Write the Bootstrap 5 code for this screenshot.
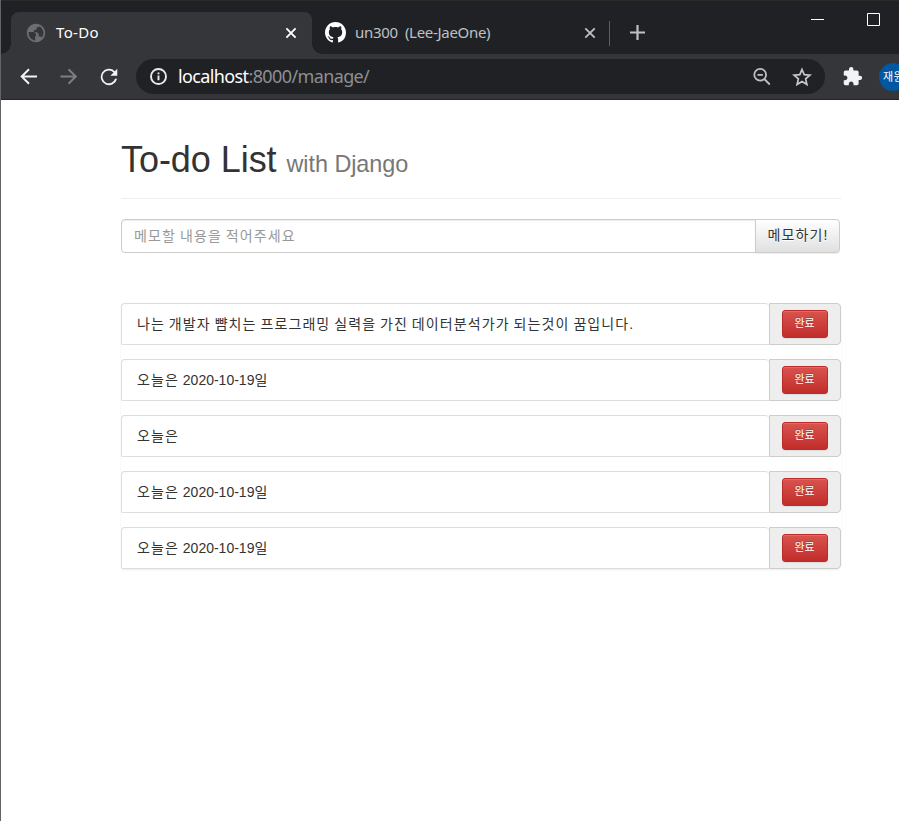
<!DOCTYPE html>
<html lang="ko">
<head>
<meta charset="utf-8">
<title>To-Do</title>
<link href="https://cdn.jsdelivr.net/npm/bootstrap@5.3.0/dist/css/bootstrap.min.css" rel="stylesheet">
<style>
body{font-family:"Liberation Sans","Noto Sans CJK KR",sans-serif;font-size:14px;line-height:20px;color:#333;background:#fff;height:821px;overflow:hidden}
.window{height:821px;border-left:1px solid #636466}
.chrome-text{font-family:"Noto Sans","Noto Sans CJK KR",sans-serif}
.tabstrip{height:54px;background:#202124;border-top:1px solid #2b2c2a}
.tab-on{width:301px;height:42px;margin-left:10px;padding:0 14px 0 15px;background:#35363a;border-radius:8px 8px 0 0;color:#fff;position:relative}
.tab-on::before,.tab-on::after{content:"";position:absolute;bottom:0;width:10px;height:10px}
.tab-on::before{left:-10px;background:radial-gradient(circle at 0 0,transparent 9.5px,#35363a 10px)}
.tab-on::after{right:-10px;background:radial-gradient(circle at 100% 0,transparent 9.5px,#35363a 10px)}
.tab-off{width:297px;height:42px;padding:0 12px 0 13px;color:#bdc1c6}
.tab-tools{height:42px}
.tab-name{font-size:15px;line-height:20px;white-space:nowrap;margin-bottom:2px}
.tab-on svg,.tab-off svg{margin-bottom:1px}
.n1{margin-left:10px;letter-spacing:.35px}
.n2{margin-left:9px;letter-spacing:-.3px;word-spacing:3.5px}
.tab-rule{width:1px;height:25px;background:#5b5e62}
.plus{margin:0 0 2px 20px}
.winctl{height:37px;padding-right:19px;gap:43px}
.toolbar{height:46px;background:#35363a;border-bottom:1px solid #242527;padding-left:18px}
.fwd{margin:0 19px 0 20px}
.omni{flex:none;width:689px;height:35px;border-radius:18px;background:#202124;margin-left:16px;padding:0 13px 0 13px}
.address{font-size:18px;line-height:24px;color:#8c8f93;margin:0 0 1px 10px;letter-spacing:-.62px;white-space:nowrap}
.address b{font-weight:400;color:#fff}
.star{margin-left:20px}
.puzzle{margin-left:17px}
.avatar{width:28px;height:28px;border-radius:50%;background:#0158a0;color:#fff;font-size:11px;line-height:27px;padding-left:4px;letter-spacing:.3px;margin-left:16px;white-space:nowrap}
.page{width:720px;margin-left:120px;padding-top:40px}
.headline{height:59px;border-bottom:1px solid #eee;margin-bottom:20px}
.headline h1{font-size:36px;line-height:40px;font-weight:400;margin:0;color:#333;letter-spacing:-.05px}
.headline span{font-size:23.4px;color:#777}
.memo{width:719px;height:34px;margin-bottom:50px}
.ko{letter-spacing:1.12px;word-spacing:-1.12px}
.memo .form-control{height:34px;font-size:14px;padding:6px 12px;border-color:#ccc;border-radius:4px 0 0 4px;box-shadow:inset 0 1px 1px rgba(0,0,0,.075);color:#333}
.memo .form-control::placeholder{color:#999;opacity:1}
.memo .btn{width:85px;height:34px;font-size:14px;line-height:20px;padding:5px 0 7px 1px;border:1px solid #ccc;border-radius:0 4px 4px 0;background:linear-gradient(#fff,#e0e0e0);text-shadow:0 1px 0 #fff;box-shadow:inset 0 1px 0 rgba(255,255,255,.15),0 1px 1px rgba(0,0,0,.075);color:#333;white-space:nowrap}
.todos{gap:14px;border-radius:4px;box-shadow:0 1px 2px rgba(0,0,0,.075)}
.todo{height:42px;background:#fff}
.todo-text{border:1px solid #ddd;border-right:0;border-radius:4px 4px 0 2px;padding:10px 15px;line-height:20px}
.todo-text.ko{letter-spacing:1.1px}
.todo-text span{letter-spacing:0}
.todo-act{width:72px;background:#eee;border:1px solid #ccc;border-radius:0 4px 4px 0;padding-left:12px}
.todo-act .btn{width:46px;height:28px;padding:0 1px 2px 0;font-size:11px;line-height:20px;color:#fff;border:1px solid #b92c28;border-radius:3px;background:linear-gradient(#d9534f,#c12e2a);text-shadow:0 -1px 0 rgba(0,0,0,.2);box-shadow:inset 0 1px 0 rgba(255,255,255,.15),0 1px 1px rgba(0,0,0,.075)}
svg{display:block;flex:none}
</style>
<script src="https://cdn.jsdelivr.net/npm/bootstrap@5.3.0/dist/js/bootstrap.bundle.min.js"></script>
</head>
<body>
<div class="window">
  <header class="chrome-text">
    <div class="tabstrip d-flex align-items-end">
      <div class="tab-on d-flex align-items-center">
        <svg width="20" height="20" viewBox="0 0 24 24" fill="#6b6e73"><path d="M12 1C5.900 1 1 5.900 1 12s4.900 11 11 11 11-4.900 11-11S18.100 1 12 1zM11 20.900C6.600 20.400 3.100 16.600 3.100 12c0-.4 0-.8.1-1.200H9.500l2.500 2.200v2.200l-1 1zM18.900 17.700c-.4-.9-1.200-1.500-2.200-1.500h-1.500v-3l-2-2H9.500V8.700l3.200-1V5.200h2.500l1-1.200a9 9 0 0 1 2.700 13.700z"/></svg>
        <span class="tab-name n1">To-Do</span>
        <svg class="ms-auto" width="14" height="14" viewBox="0 0 14 14" fill="none" stroke="#fff" stroke-width="1.9"><path d="M2.400 2.400l9.200 9.200M11.600 2.400l-9.200 9.200"/></svg>
      </div>
      <div class="tab-off d-flex align-items-center">
        <svg width="21" height="21" viewBox="0 0 16 16" fill="#fff"><path d="M8 0C3.580 0 0 3.580 0 8c0 3.540 2.290 6.530 5.470 7.590.4.070.55-.17.55-.38 0-.19-.01-.82-.01-1.490-2.010.37-2.530-.49-2.690-.94-.09-.23-.48-.94-.82-1.130-.28-.15-.68-.52-.01-.53.63-.01 1.080.58 1.230.82.72 1.210 1.870.87 2.330.66.07-.52.28-.87.51-1.070-1.780-.2-3.640-.89-3.640-3.950 0-.87.31-1.590.82-2.150-.08-.2-.36-1.020.08-2.120 0 0 .67-.21 2.200.82.64-.18 1.320-.27 2-.27s1.360.09 2 .27c1.530-1.040 2.200-.82 2.200-.82.44 1.100.16 1.920.08 2.120.51.56.82 1.270.82 2.150 0 3.070-1.870 3.750-3.650 3.950.29.25.54.73.54 1.480 0 1.070-.01 1.930-.01 2.200 0 .21.15.46.55.38A8.010 8.010 0 0 0 16 8c0-4.420-3.580-8-8-8z"/></svg>
        <span class="tab-name n2">un300 (Lee-JaeOne)</span>
        <svg class="ms-auto" width="14" height="14" viewBox="0 0 14 14" fill="none" stroke="#bdc1c6" stroke-width="1.800"><path d="M2.300 2.300l9.400 9.400M11.700 2.300l-9.400 9.400"/></svg>
      </div>
      <div class="tab-tools d-flex align-items-center"><div class="tab-rule"></div>
        <svg class="plus" width="15" height="15" viewBox="0 0 15 15" fill="none" stroke="#bdc1c6" stroke-width="2.200"><path d="M7.500 0v15M0 7.500h15"/></svg>
      </div>
      <div class="winctl d-flex align-items-center ms-auto align-self-start">
        <svg width="13" height="13" viewBox="0 0 13 13"><path d="M0 6.500h13" stroke="#fff"/></svg>
        <svg width="13" height="13" viewBox="0 0 13 13"><path d="M.5.5h12v12H.5z" fill="none" stroke="#fff"/></svg>
      </div>
    </div>
    <div class="toolbar d-flex align-items-center overflow-hidden">
      <svg width="20" height="20" viewBox="0 0 20 20" fill="none" stroke="#f1f3f4" stroke-width="2"><path d="M18 9.500H3M10 2.200L2.700 9.500l7.300 7.300"/></svg>
      <svg class="fwd" width="20" height="20" viewBox="0 0 20 20" fill="none" stroke="#7c7e82" stroke-width="2"><path d="M1.500 9.500h15M9.500 2.200l7.300 7.300-7.300 7.300"/></svg>
      <svg width="22" height="22" viewBox="0 0 24 24" fill="#f1f3f4"><path d="M18.400 5.600A9 9 0 1 0 20.800 14h-2.200A7 7 0 1 1 17 7.100L13.500 10.600H21V3z"/></svg>
      <div class="omni d-flex align-items-center">
        <svg width="19" height="19" viewBox="0 0 19 19" fill="none" stroke="#e8eaed" stroke-width="1.900"><circle cx="9.500" cy="9.500" r="7.500"/><path d="M9.500 8.600v4.600M9.500 5.400v1.900"/></svg>
        <span class="address"><b>localhost</b>:8000/manage/</span>
        <svg class="ms-auto" width="20" height="20" viewBox="0 0 20 20" fill="none" stroke="#bdc1c6" stroke-width="1.800"><circle cx="8.200" cy="7.800" r="5.900"/><path d="M12.300 12l5.500 5.500M5.500 7.800h5.400"/></svg>
        <svg class="star" width="20" height="20" viewBox="0 0 20 20" fill="none" stroke="#c6c9cc" stroke-width="1.700"><path d="M10 2.500l2.200 5.200 5.700.5-4.300 3.700 1.300 5.500L10 14.500l-4.900 2.900 1.300-5.500-4.300-3.700 5.700-.5z"/></svg>
      </div>
      <svg class="puzzle" width="21" height="21" viewBox="0 0 24 24" fill="#f1f3f4"><path d="M20.500 11H19V7c0-1.100-.9-2-2-2h-4V3.500a2.500 2.500 0 0 0-5 0V5H4c-1.100 0-1.990.9-1.990 2v3.800H3.500c1.490 0 2.700 1.210 2.700 2.700s-1.210 2.700-2.700 2.700H2V20c0 1.100.9 2 2 2h3.800v-1.500c0-1.490 1.210-2.700 2.700-2.700s2.700 1.210 2.700 2.700V22H17c1.100 0 2-.9 2-2v-4h1.500a2.500 2.500 0 0 0 0-5z"/></svg>
      <div class="avatar flex-shrink-0">재원</div>
    </div>
  </header>
  <main class="page">
    <div class="headline"><h1>To-do List <span>with Django</span></h1></div>
    <div class="memo input-group flex-nowrap">
      <input class="form-control ko" type="text" placeholder="메모할 내용을 적어주세요" aria-label="메모">
      <button class="btn ko" type="button">메모하기!</button>
    </div>
    <div class="todos d-flex flex-column">
      <div class="todo d-flex"><div class="todo-text ko flex-grow-1">나는 개발자 뺨치는 프로그래밍 실력을 가진 데이터분석가가 되는것이 꿈입니다.</div><div class="todo-act d-flex align-items-center"><button class="btn">완료</button></div></div>
      <div class="todo d-flex"><div class="todo-text ko flex-grow-1">오늘은 <span>2020-10-19</span>일</div><div class="todo-act d-flex align-items-center"><button class="btn">완료</button></div></div>
      <div class="todo d-flex"><div class="todo-text ko flex-grow-1">오늘은</div><div class="todo-act d-flex align-items-center"><button class="btn">완료</button></div></div>
      <div class="todo d-flex"><div class="todo-text ko flex-grow-1">오늘은 <span>2020-10-19</span>일</div><div class="todo-act d-flex align-items-center"><button class="btn">완료</button></div></div>
      <div class="todo d-flex"><div class="todo-text ko flex-grow-1">오늘은 <span>2020-10-19</span>일</div><div class="todo-act d-flex align-items-center"><button class="btn">완료</button></div></div>
    </div>
  </main>
</div>
</body>
</html>
